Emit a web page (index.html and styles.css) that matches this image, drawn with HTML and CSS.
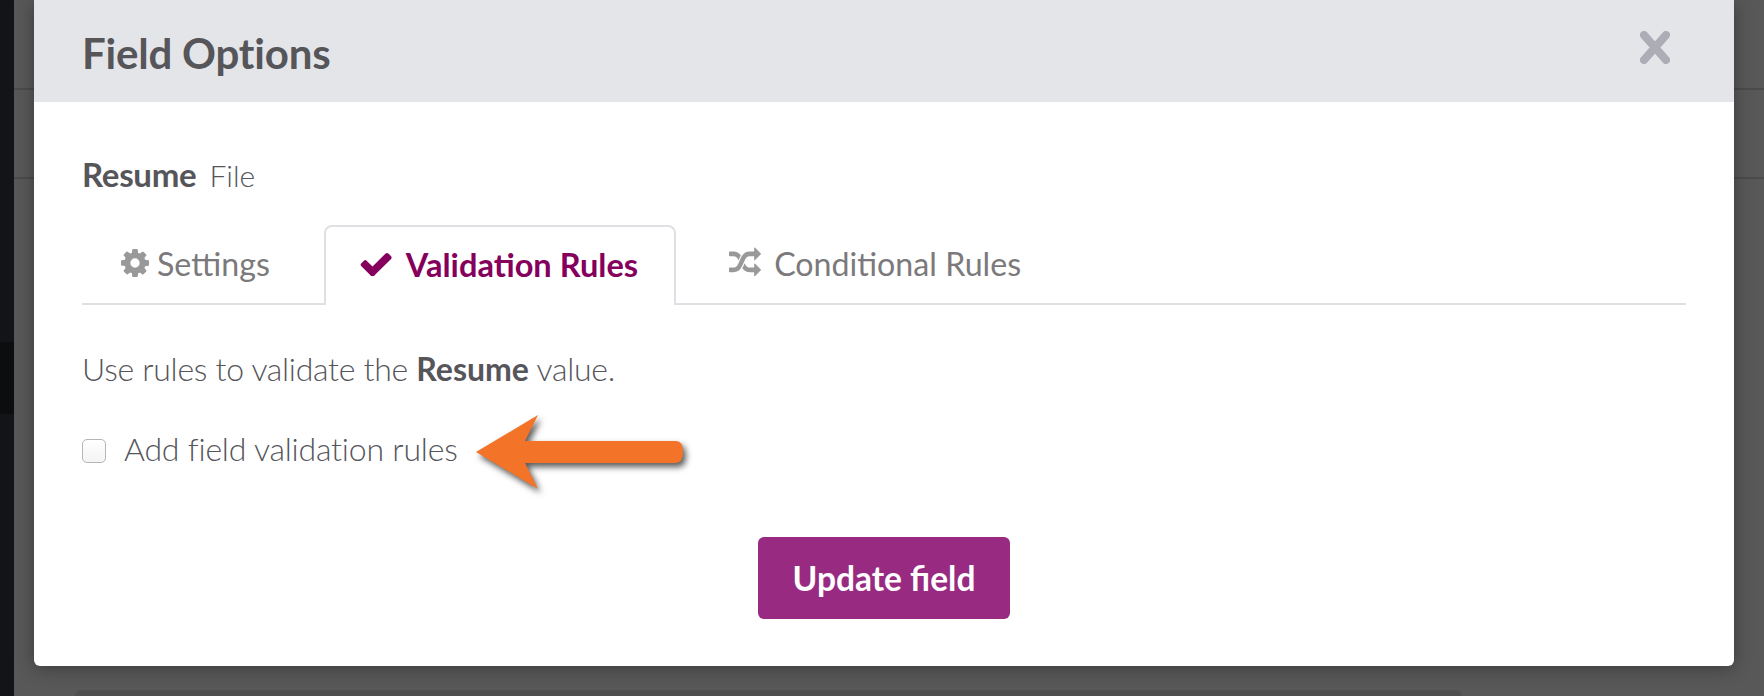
FILE: index.html
```html
<!DOCTYPE html>
<html lang="en">
<head>
    <meta charset="UTF-8">
    <meta name="viewport" content="width=device-width, initial-scale=1.0">
    <title>Field Options</title>
    <link rel="stylesheet" href="styles.css">
</head>
<body>
    <div class="app">
        <aside class="sidebar">
            <div class="sidebar-active"></div>
        </aside>
        <main class="backdrop">
            <div class="bar bar-top"></div>
            <div class="bar bar-sub"></div>
            <div class="page-card"></div>
        </main>
    </div>

    <section class="modal">
        <header class="modal-header">
            <h1>Field Options</h1>
            <svg class="close" viewBox="0 0 30 33" width="30" height="33">
                <path d="M4 4 L26 29 M26 4 L4 29" />
            </svg>
        </header>

        <div class="modal-body">
            <p class="field-name"><strong>Resume</strong> <span>File</span></p>

            <nav class="tabs">
                <a class="tab tab-settings">
                    <svg class="tab-icon" viewBox="128 128 1536 1536" width="28" height="28"><path d="M1152 896q0-106-75-181t-181-75-181 75-75 181 75 181 181 75 181-75 75-181zm512-109v222q0 12-8 23t-20 13l-185 28q-19 54-39 91 35 50 107 138 10 12 10 25t-9 23q-27 37-99 108t-94 71q-12 0-26-9l-138-108q-44 23-91 38-16 136-29 186-7 27-35 27h-222q-14 0-24.5-8.5t-11.5-21.5l-28-184q-49-16-90-37l-141 107q-10 9-25 9-14 0-25-11-126-114-165-168-7-10-7-23 0-12 8-23 15-21 51-66.5t54-70.5q-27-50-41-99l-183-27q-13-2-21-12.5t-8-23.5v-222q0-12 8-23t19-13l186-28q14-46 39-92-40-57-107-138-10-12-10-24 0-10 9-23 26-36 98.5-107.5t94.5-71.5q13 0 26 10l138 107q44-23 91-38 16-136 29-186 7-27 35-27h222q14 0 24.5 8.5t11.5 21.5l28 184q49 16 90 37l142-107q9-9 24-9 13 0 25 10 129 119 165 170 7 8 7 22 0 12-8 23-15 21-51 66.5t-54 70.5q26 50 41 98l183 28q13 2 21 12.5t8 23.5z"/></svg>
                    Settings
                </a>
                <a class="tab tab-active">
                    <svg class="tab-icon" viewBox="90 380 1600 1020" width="32" height="24"><path d="M1671 566q0 40-28 68l-724 724-136 136q-28 28-68 28t-68-28l-136-136-362-362q-28-28-28-68t28-68l136-136q28-28 68-28t68 28l294 295 656-657q28-28 68-28t68 28l136 136q28 28 28 68z"/></svg>
                    Validation Rules
                </a>
                <a class="tab">
                    <svg class="tab-icon" viewBox="0 0 1792 1792" width="32" height="32"><path d="M666 481q-60 92-137 273-22-45-37-72.5t-40.5-63.5-51-56.5-63-35-81.5-14.5h-224q-14 0-23-9t-9-23v-192q0-14 9-23t23-9h224q250 0 410 225zm1126 799q0 14-9 23l-320 320q-9 9-23 9-13 0-22.5-9.5t-9.5-22.5v-192q-32 0-85 .5t-81 1-73-1-71-5-64-10.5-63-18.5-58-28.5-59-40-55-53.5-56-69.5q59-93 136-273 22 45 37 72.5t40.5 63.5 51 56.5 63 35 81.5 14.5h256v-192q0-14 9-23t23-9q12 0 24 10l319 319q9 9 9 23zm0-896q0 14-9 23l-320 320q-9 9-23 9-13 0-22.5-9.5t-9.5-22.5v-192h-256q-48 0-87 15t-69 45-51 61.5-45 77.5q-32 62-78 171-29 66-49.5 111t-54 105-64 100-74 83-90 68.5-106.5 42-128 16.5h-224q-14 0-23-9t-9-23v-192q0-14 9-23t23-9h224q48 0 87-15t69-45 51-61.5 45-77.5q32-62 78-171 29-66 49.5-111t54-105 64-100 74-83 90-68.5 106.5-42 128-16.5h256v-192q0-14 9-23t23-9q12 0 24 10l319 319q9 9 9 23z"/></svg>
                    Conditional Rules
                </a>
            </nav>

            <p class="tab-intro">Use rules to validate the <strong>Resume</strong> value.</p>

            <div class="check-row">
                <label class="check-label"><input type="checkbox" class="check"> Add field validation rules</label>
                <svg class="arrow" viewBox="0 0 216 82" width="216" height="82">
                    <path d="M0 37 L62 0 L49 26 H200 Q207 26 207 37 Q207 48 200 48 H49 L62 74 Z" />
                </svg>
            </div>

            <div class="actions">
                <button class="btn-update">Update field</button>
            </div>
        </div>
    </section>
</body>
</html>
```

FILE: styles.css
```css
/* General */
* { box-sizing: border-box; }
body { margin: 0; width: 1764px; height: 696px; overflow: hidden; font-family: "Lato", sans-serif; color: #55555a; background: #585858; }

/* Page behind the modal */
.app { display: flex; height: 696px; }
.sidebar { width: 14px; background: #121418; padding-top: 342px; }
.sidebar-active { height: 72px; background: #0c0d0f; }
.backdrop { flex: 1; display: flex; flex-direction: column; background: #585858; }
.bar { border-bottom: 2px solid #4b4b4b; }
.bar-top { height: 90px; }
.bar-sub { height: 89px; }
.page-card { height: 6px; margin: 511px 302px 0 61px; background: #4f4f4f; border-radius: 6px 6px 0 0; }

/* Modal */
.modal { position: absolute; top: 0; left: 34px; width: 1700px; height: 666px; background: #fff; border-radius: 0 0 6px 6px; box-shadow: 0 2px 18px rgba(0, 0, 0, 0.35); }
.modal-header { height: 102px; padding: 0 48px; display: flex; align-items: center; justify-content: space-between; background: #e4e5e9; }
.modal-header h1 { margin: 4px 0 0; font-size: 42px; font-weight: 700; letter-spacing: -0.2px; color: #55555a; }
.close { margin-right: 16px; margin-bottom: 8px; }
.close path { fill: none; stroke: #acadb6; stroke-width: 8; stroke-linecap: round; }
.modal-body { padding: 0 48px; }

.field-name { margin: 0; padding-top: 55px; height: 123px; font-size: 30px; line-height: 34px; font-weight: 300; }
.field-name strong { font-size: 33px; letter-spacing: -0.3px; font-weight: 700; margin-right: 5px; }

/* Tabs */
.tabs { display: flex; height: 80px; border-bottom: 2px solid #e0e0e4; }
.tab { display: flex; align-items: center; gap: 13px; height: 80px; padding: 0 38px 4px; margin-right: 16px; font-size: 32.2px; color: #7b797c; }
.tab-settings { gap: 8px; padding-left: 39px; }
.tab-icon { fill: #999; flex: none; }
.tab-active { padding: 0 36px 4px 34px; gap: 14px; margin-right: 15px; border: 2px solid #e0e0e4; border-bottom: none; border-radius: 8px 8px 0 0; background: #fff; color: #85005c; font-size: 32.6px; font-weight: 700; }
.tab-active .tab-icon { fill: #85005c; }

.tab-intro { margin: 0; padding-top: 47px; font-size: 32px; line-height: 34px; letter-spacing: -0.28px; font-weight: 300; }
.tab-intro strong { font-weight: 700; letter-spacing: 0; }

/* Checkbox row */
.check-row { display: flex; align-items: center; gap: 18px; height: 80px; margin-top: 26px; }
.check-label { display: flex; align-items: center; gap: 18px; margin-bottom: 8px; font-size: 32px; letter-spacing: -0.2px; font-weight: 300; }
.check { appearance: none; width: 24px; height: 24px; margin: 6px 0 0; border: 1px solid #b5b5b5; border-radius: 5px; background: linear-gradient(#fff, #f4f4f4); }
.arrow { fill: #f37428; filter: drop-shadow(3px 4px 3px rgba(0, 0, 0, 0.65)); margin-top: 8px; }

/* Footer button */
.actions { display: flex; justify-content: center; margin-top: 45px; }
.btn-update { width: 252px; height: 82px; border: none; border-radius: 6px; background: #982a81; color: #fff; font-family: "Lato", sans-serif; font-size: 33.5px; font-weight: 700; }
```
